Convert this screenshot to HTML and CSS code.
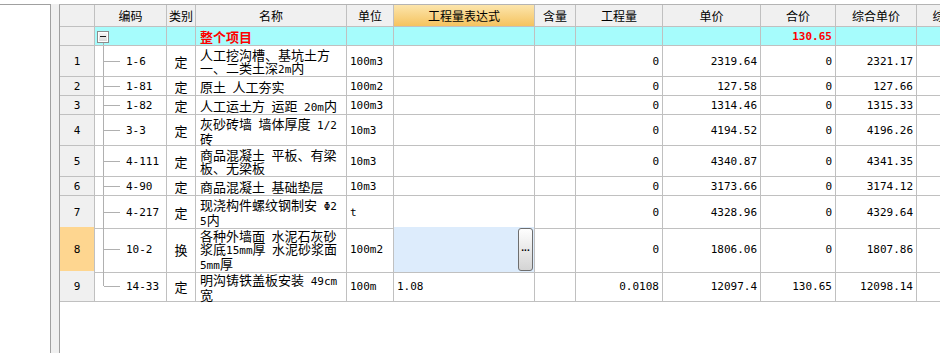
FILE: index.html
```html
<!DOCTYPE html>
<html lang="zh-CN">
<head>
<meta charset="utf-8">
<title>分部分项</title>
<link rel="stylesheet" href="styles.css">
</head>
<body>
<div class="app">
  <div class="tree"></div>
  <div class="splitter"></div>
  <div class="grid">
    <div class="row head">
      <div class="cell"></div>
      <div class="cell">编码</div>
      <div class="cell">类别</div>
      <div class="cell">名称</div>
      <div class="cell">单位</div>
      <div class="cell hl">工程量表达式</div>
      <div class="cell">含量</div>
      <div class="cell">工程量</div>
      <div class="cell">单价</div>
      <div class="cell">合价</div>
      <div class="cell">综合单价</div>
      <div class="cell">综合合价</div>
    </div>
    <div class="row h1 summary">
      <div class="cell no"></div>
      <div class="cell root"><span class="minus"></span></div>
      <div class="cell"></div>
      <div class="cell name red">整个项目</div>
      <div class="cell"></div>
      <div class="cell"></div>
      <div class="cell"></div>
      <div class="cell"></div>
      <div class="cell"></div>
      <div class="cell num red">130.65</div>
      <div class="cell"></div>
      <div class="cell"></div>
    </div>
    <div class="row h2">
      <div class="cell no">1</div>
      <div class="cell code">1-6</div>
      <div class="cell cat">定</div>
      <div class="cell name">人工挖沟槽、基坑土方<br>一、二类土深<span class="a">2m</span>内</div>
      <div class="cell mono">100m3</div>
      <div class="cell"></div>
      <div class="cell"></div>
      <div class="cell num">0</div>
      <div class="cell num">2319.64</div>
      <div class="cell num">0</div>
      <div class="cell num">2321.17</div>
      <div class="cell"></div>
    </div>
    <div class="row h1">
      <div class="cell no">2</div>
      <div class="cell code">1-81</div>
      <div class="cell cat">定</div>
      <div class="cell name">原土 人工夯实</div>
      <div class="cell mono">100m2</div>
      <div class="cell"></div>
      <div class="cell"></div>
      <div class="cell num">0</div>
      <div class="cell num">127.58</div>
      <div class="cell num">0</div>
      <div class="cell num">127.66</div>
      <div class="cell"></div>
    </div>
    <div class="row h1">
      <div class="cell no">3</div>
      <div class="cell code">1-82</div>
      <div class="cell cat">定</div>
      <div class="cell name">人工运土方 运距<span class="a"> 20m</span>内</div>
      <div class="cell mono">100m3</div>
      <div class="cell"></div>
      <div class="cell"></div>
      <div class="cell num">0</div>
      <div class="cell num">1314.46</div>
      <div class="cell num">0</div>
      <div class="cell num">1315.33</div>
      <div class="cell"></div>
    </div>
    <div class="row h2">
      <div class="cell no">4</div>
      <div class="cell code">3-3</div>
      <div class="cell cat">定</div>
      <div class="cell name">灰砂砖墙 墙体厚度<span class="a"> 1/2</span><br>砖</div>
      <div class="cell mono">10m3</div>
      <div class="cell"></div>
      <div class="cell"></div>
      <div class="cell num">0</div>
      <div class="cell num">4194.52</div>
      <div class="cell num">0</div>
      <div class="cell num">4196.26</div>
      <div class="cell"></div>
    </div>
    <div class="row h2">
      <div class="cell no">5</div>
      <div class="cell code">4-111</div>
      <div class="cell cat">定</div>
      <div class="cell name">商品混凝土 平板、有梁<br>板、无梁板</div>
      <div class="cell mono">10m3</div>
      <div class="cell"></div>
      <div class="cell"></div>
      <div class="cell num">0</div>
      <div class="cell num">4340.87</div>
      <div class="cell num">0</div>
      <div class="cell num">4341.35</div>
      <div class="cell"></div>
    </div>
    <div class="row h1">
      <div class="cell no">6</div>
      <div class="cell code">4-90</div>
      <div class="cell cat">定</div>
      <div class="cell name">商品混凝土 基础垫层</div>
      <div class="cell mono">10m3</div>
      <div class="cell"></div>
      <div class="cell"></div>
      <div class="cell num">0</div>
      <div class="cell num">3173.66</div>
      <div class="cell num">0</div>
      <div class="cell num">3174.12</div>
      <div class="cell"></div>
    </div>
    <div class="row h2">
      <div class="cell no">7</div>
      <div class="cell code">4-217</div>
      <div class="cell cat">定</div>
      <div class="cell name">现浇构件螺纹钢制安<span class="a"> Φ2</span><br><span class="a">5</span>内</div>
      <div class="cell mono">t</div>
      <div class="cell"></div>
      <div class="cell"></div>
      <div class="cell num">0</div>
      <div class="cell num">4328.96</div>
      <div class="cell num">0</div>
      <div class="cell num">4329.64</div>
      <div class="cell"></div>
    </div>
    <div class="row h3">
      <div class="cell no sel">8</div>
      <div class="cell code">10-2</div>
      <div class="cell cat">换</div>
      <div class="cell name">各种外墙面 水泥石灰砂<br>浆底<span class="a">15mm</span>厚 水泥砂浆面<br><span class="a">5mm</span>厚</div>
      <div class="cell mono">100m2</div>
      <div class="cell active"><span class="dots">...</span></div>
      <div class="cell"></div>
      <div class="cell num">0</div>
      <div class="cell num">1806.06</div>
      <div class="cell num">0</div>
      <div class="cell num">1807.86</div>
      <div class="cell"></div>
    </div>
    <div class="row h2">
      <div class="cell no">9</div>
      <div class="cell code last">14-33</div>
      <div class="cell cat">定</div>
      <div class="cell name">明沟铸铁盖板安装<span class="a"> 49cm</span><br>宽</div>
      <div class="cell mono">100m</div>
      <div class="cell mono">1.08</div>
      <div class="cell"></div>
      <div class="cell num">0.0108</div>
      <div class="cell num">12097.4</div>
      <div class="cell num">130.65</div>
      <div class="cell num">12098.14</div>
      <div class="cell"></div>
    </div>
  </div>
</div>
</body>
</html>
```
FILE: styles.css
```css
* { box-sizing: border-box; }
html, body { margin: 0; padding: 0; }
body {
  width: 940px;
  height: 353px;
  overflow: hidden;
  background: #fff;
  color: #000;
  font-family: "Noto Sans CJK SC", sans-serif;
  font-size: 13px;
}
.app {
  display: flex;
  height: 353px;
  padding-top: 4px;
}
.tree {
  flex: none;
  width: 51px;
  background: #fff;
  border-top: 1px solid #a0a0a0;
  border-right: 1px solid #a0a0a0;
}
.splitter {
  flex: none;
  width: 8px;
  background: #f0f0f0;
}
.grid {
  flex: 1;
  min-width: 0;
  overflow: hidden;
  background: #fff;
  border-left: 1px solid #a0a0a0;
  border-top: 1px solid #b4b4b4;
}
.row {
  display: grid;
  grid-template-columns: 35px 72px 29px 151px 47px 141px 41px 87px 98px 75px 81px 80px;
  width: 937px;
}
.cell {
  display: flex;
  align-items: center;
  padding: 0 3px;
  overflow: hidden;
  white-space: nowrap;
  border-right: 1px solid #c0c0c0;
  border-bottom: 1px solid #c0c0c0;
}
.head .cell {
  height: 22px;
  justify-content: center;
  background: #f0f0f0;
  font-size: 12px;
}
.head .hl {
  background: linear-gradient(#fce5ac, #f5c35f);
}
.h1 { height: 19px; }
.h2 { height: 31px; }
.h3 { height: 44px; }
.summary .cell { background: #a6fcfc; }
.summary .cell.no { background: #f0f0f0; }
.no {
  justify-content: center;
  background: #f0f0f0;
  font-family: "DejaVu Sans Mono", monospace;
  font-size: 11px;
}
.no.sel { background: #fed690; }
.root {
  padding-left: 2px;
  background:
    linear-gradient(#b0b0b0, #b0b0b0) 8px 100% / 1px 3px no-repeat,
    #a6fcfc !important;
}
.minus {
  width: 12px;
  height: 12px;
  margin-top: 1px;
  border: 1px solid #8c8c8c;
  box-shadow: inset 0 0 0 1px #fff;
  background:
    linear-gradient(#1a1a1a, #1a1a1a) 50% 50% / 6px 1px no-repeat,
    linear-gradient(#f8f8f8, #d8d8d8);
}
.code {
  padding-left: 31px;
  font-family: "DejaVu Sans Mono", monospace;
  font-size: 11px;
  background:
    linear-gradient(#b0b0b0, #b0b0b0) 8px 0 / 1px 100% no-repeat,
    linear-gradient(#b0b0b0, #b0b0b0) 9px 50% / 16px 1px no-repeat;
}
.code.last {
  background:
    linear-gradient(#b0b0b0, #b0b0b0) 8px 0 / 1px 50% no-repeat,
    linear-gradient(#b0b0b0, #b0b0b0) 9px 50% / 16px 1px no-repeat;
}
.cat { justify-content: center; }
.name {
  display: block;
  overflow: visible;
  padding: 2px 3px 0 4px;
  line-height: 13px;
  word-spacing: 3.5px;
}
.h1 .name { padding-top: 3px; }
.h2 .name { padding-top: 2px; }
.h3 .name { padding-top: 2px; }
.a {
  font-family: "DejaVu Sans Mono", monospace;
  font-size: 11px;
  word-spacing: 0;
}
.mono {
  font-family: "DejaVu Sans Mono", monospace;
  font-size: 11px;
}
.num {
  justify-content: flex-end;
  font-family: "DejaVu Sans Mono", monospace;
  font-size: 11px;
}
.red {
  color: #ff0000;
  font-weight: bold;
}
.active {
  justify-content: flex-end;
  align-items: stretch;
  padding: 1px 1px 1px 0;
  background: #ddecfc;
}
.dots {
  display: flex;
  align-items: center;
  justify-content: center;
  width: 15px;
  padding-bottom: 3px;
  border: 1px solid #6e6e6e;
  border-radius: 3px;
  background: linear-gradient(#fefefe, #d4d4d4);
  font-family: "Liberation Sans", sans-serif;
  font-size: 10px;
  font-weight: bold;
  letter-spacing: 0;
  line-height: 1;
}
```
